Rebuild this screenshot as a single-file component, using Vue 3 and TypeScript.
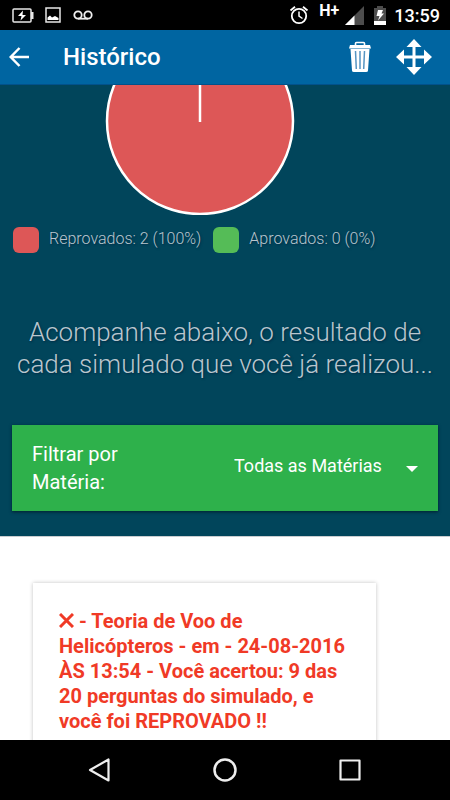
<script setup lang="ts">
import { ref } from 'vue'

interface LegendItem {
  label: string
  count: number
  percent: number
  tone: 'failed' | 'passed'
}

interface Result {
  subject: string
  date: string
  time: string
  correct: number
  total: number
}

const legend: LegendItem[] = [
  { label: 'Reprovados', count: 2, percent: 100, tone: 'failed' },
  { label: 'Aprovados', count: 0, percent: 0, tone: 'passed' },
]

const subjects: string[] = ['Todas as Matérias']
const selected = ref<string>(subjects[0])

const results: Result[] = [
  { subject: 'Teoria de Voo de Helicópteros', date: '24-08-2016', time: '13:54', correct: 9, total: 20 },
]
</script>

<template>
  <div class="screen">
    <div class="status">
      <svg class="battery" width="22" height="15" viewBox="0 0 22 15">
        <rect x="1" y="1" width="18" height="13" rx="1" fill="none" stroke="#e8e8e8" stroke-width="1.5" />
        <path d="M19 4h2.500v7H19z" fill="#e8e8e8" />
        <path d="M11 2.500 6 8h3.500L8.500 12.500 14 7h-3.500z" fill="#fff" />
      </svg>
      <svg class="photo" width="16" height="16" viewBox="0 0 16 16">
        <rect x="1" y="1" width="14" height="14" fill="none" stroke="#e8e8e8" stroke-width="1.500" />
        <path d="M2.500 13V10.500L5 8.500l2 2L10 9l3.500 2v2z" fill="#fff" />
      </svg>
      <svg width="20" height="10" viewBox="0 0 20 10" fill="none" stroke="#f0f0f0" stroke-width="1.800">
        <circle cx="5" cy="5" r="3.700" />
        <circle cx="15" cy="5" r="3.700" />
        <path d="M5 8.700h10" />
      </svg>
      <span class="spacer"></span>
      <svg class="alarm" width="20" height="20" viewBox="0 0 20 20" fill="none" stroke="#fff" stroke-width="1.800">
        <circle cx="10" cy="11" r="7.200" />
        <path d="M1.500 5.500 6 1.800M18.500 5.500 14 1.800" />
        <path d="M10 6.500V11l3.500 2.500" stroke-width="1.500" />
      </svg>
      <span class="network">H+</span>
      <svg class="signal" width="19" height="19" viewBox="0 0 19 19">
        <path d="M19 0v19H0z" fill="#4d4d4d" />
        <path d="M9.500 9.500V19H0z" fill="#fff" />
      </svg>
      <svg class="charge" width="12" height="19" viewBox="0 0 12 19">
        <path d="M0 2h3V0h6v2h3v17H0z" fill="#4d4d4d" />
        <path d="M0 15h12v4H0z" fill="#fff" />
        <path d="M4 4h5L7.500 7.500H10L4 14.500 5.500 10H2.500z" fill="#fff" />
      </svg>
      <span class="clock">13:59</span>
    </div>

    <header class="bar">
      <button class="icon" type="button" aria-label="Voltar">
        <svg width="20" height="20" viewBox="0 0 20 20" fill="none" stroke="#fff" stroke-width="2.500">
          <path d="M20 10H2M10.500 1 1.700 10l8.800 9" />
        </svg>
      </button>
      <h1>Histórico</h1>
      <button class="icon trash" type="button" aria-label="Apagar">
        <svg width="24" height="32" viewBox="0 0 24 32">
          <path d="M7.500 4.500V2.500Q7.500 1.500 8.500 1.500h7q1 0 1 1v2" fill="none" stroke="#fff" stroke-width="1.600" />
          <path d="M2 4h20l1 3.500H1z" fill="#fff" />
          <path d="M2.500 8h19L20 29.500Q20 31 18 31H6q-2 0-2-1.500z" fill="#fff" />
          <path d="m7.500 10 .8 18M12 10v18M16.500 10l-.8 18" stroke="#5795c2" stroke-width="1.500" />
        </svg>
      </button>
      <button class="icon" type="button" aria-label="Mover">
        <svg width="36" height="36" viewBox="0 0 36 36">
          <path d="M18 4v28M4 18h28" stroke="#fff" stroke-width="3" />
          <path d="m18 0 7.500 8h-15zM18 36l7.500-8h-15zM0 18l8-7.500v15zM36 18l-8-7.500v15z" fill="#fff" />
        </svg>
      </button>
    </header>

    <main class="content">
      <section class="summary">
        <svg class="pie" width="190" height="130" viewBox="0 0 190 130" role="img" aria-label="Reprovados 100%">
          <circle cx="95" cy="36" r="93" fill="#dd5757" stroke="#fff" stroke-width="2.500" />
          <path d="M95 0v37" stroke="#fff" stroke-width="2.500" />
        </svg>
        <ul class="legend">
          <li v-for="item in legend" :key="item.label">
            <span class="swatch" :class="item.tone"></span>
            {{ item.label }}: {{ item.count }} ({{ item.percent }}%)
          </li>
        </ul>
        <p class="intro">Acompanhe abaixo, o resultado de cada simulado que você já realizou...</p>
        <div class="filter">
          <label for="subject">Filtrar por Matéria:</label>
          <div class="picker">
            <select id="subject" v-model="selected">
              <option v-for="s in subjects" :key="s" :value="s">{{ s }}</option>
            </select>
            <svg width="12" height="6" viewBox="0 0 12 6"><path d="M0 0h12L6 6z" fill="#fff" /></svg>
          </div>
        </div>
      </section>

      <section class="results">
        <article v-for="r in results" :key="r.date + r.time" class="card">
          <svg class="cross" width="15" height="15" viewBox="0 0 15 15" role="img" aria-label="Reprovado">
            <path d="m1 1 13 13M14 1 1 14" stroke="#f03a26" stroke-width="3" />
          </svg>
          - {{ r.subject }} - em - {{ r.date }} ÀS {{ r.time }} - Você acertou: {{ r.correct }} das
          {{ r.total }} perguntas do simulado, e você foi REPROVADO !!
        </article>
      </section>
    </main>

    <nav class="nav">
      <button class="icon" type="button" aria-label="Voltar à tela anterior">
        <svg width="24" height="24" viewBox="0 0 24 24" fill="none" stroke="#eee" stroke-width="2.200" stroke-linejoin="round">
          <path d="M20.500 1.500v21L2 12z" />
        </svg>
      </button>
      <button class="icon" type="button" aria-label="Início">
        <svg width="24" height="24" viewBox="0 0 24 24" fill="none" stroke="#eee" stroke-width="2.500">
          <circle cx="12" cy="12" r="10.500" />
        </svg>
      </button>
      <button class="icon" type="button" aria-label="Recentes">
        <svg width="24" height="24" viewBox="0 0 24 24" fill="none" stroke="#eee" stroke-width="2.200" stroke-linejoin="round">
          <rect x="2.500" y="2.500" width="19" height="19" />
        </svg>
      </button>
    </nav>
  </div>
</template>

<style>
body {
  margin: 0;
}
</style>

<style scoped>
.screen {
  display: flex;
  flex-direction: column;
  height: 100vh;
  background: #fff;
  color: #fff;
  font-family: Roboto, 'Liberation Sans', sans-serif;
}

svg {
  display: block;
  flex: none;
}

.status {
  display: flex;
  align-items: center;
  height: 30px;
  padding: 0 10px 0 12px;
  background: #000;
  flex: none;
}

.photo {
  margin: 0 12px 0 11px;
}

.spacer {
  flex: 1;
}

.network {
  margin: 0 6px 8px 10px;
  font-size: 16px;
  line-height: 20px;
  font-weight: 700;
}

.charge {
  margin: 0 8px 0 10px;
}

.clock {
  font-size: 18px;
  font-weight: 500;
}

.bar {
  display: flex;
  align-items: center;
  height: 54px;
  padding: 0 18px 0 9px;
  background: #0065a1;
  border-bottom: 1px solid #02518a;
  flex: none;
}

.icon {
  padding: 0;
  border: 0;
  background: none;
}

h1 {
  flex: 1;
  margin: 0 0 0 34px;
  font-size: 24px;
  line-height: 32px;
  font-weight: 500;
}

.trash {
  margin-right: 24px;
}

.content {
  flex: 1;
  min-height: 0;
  overflow: hidden;
}

.summary {
  padding: 0 12px 25px;
  background: #01455b;
  border-bottom: 1px solid #c9cdd0;
}

.pie {
  margin: 0 auto 0 93px;
}

.legend {
  display: flex;
  gap: 12px;
  margin: 12px 0 0 1px;
  padding: 0;
  list-style: none;
  color: #b9c6ce;
  font-size: 16px;
  line-height: 24px;
  font-weight: 300;
  text-shadow: 1px 1px 2px #022c46;
}

.legend li {
  display: flex;
  gap: 10px;
  white-space: nowrap;
}

.swatch {
  width: 26px;
  height: 26px;
  border-radius: 6px;
}

.failed {
  background: #dd5757;
}

.passed {
  background: #55bc57;
}

.intro {
  margin: 63px 0 45px;
  color: #b9c6ce;
  font-size: 26px;
  line-height: 32px;
  font-weight: 300;
  text-align: center;
  text-shadow: 1px 1px 2px #022c46;
}

.filter {
  display: flex;
  align-items: center;
  justify-content: space-between;
  padding: 15px 20px;
  background: #2eb14b;
  box-shadow: 0 1px 3px #00202f;
}

.filter label {
  width: 120px;
  font-size: 20px;
  line-height: 28px;
}

.picker {
  display: flex;
  align-items: center;
  padding-bottom: 4px;
}

.picker select {
  width: 172px;
  margin: 0;
  padding: 0;
  border: 0;
  appearance: none;
  background: none;
  color: #fff;
  font: 400 18px / 24px Roboto, 'Liberation Sans', sans-serif;
}

.picker svg {
  margin-top: 5px;
}

.results {
  padding: 46px 74px 0 33px;
}

.card {
  padding: 26px;
  background: #fff;
  box-shadow: 0 0 4px #0000003d;
  color: #f03a26;
  font-size: 20px;
  line-height: 25px;
  font-weight: 700;
}

.cross {
  display: inline-block;
}

.nav {
  display: flex;
  align-items: center;
  justify-content: space-around;
  height: 60px;
  padding: 0 38px;
  background: #000;
  flex: none;
}
</style>
